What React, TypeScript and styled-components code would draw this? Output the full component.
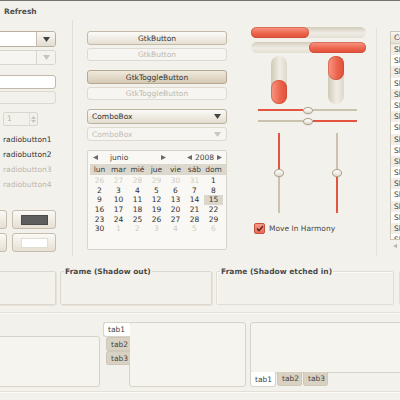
import React from "react";
import styled, { createGlobalStyle } from "styled-components";

const GlobalStyle = createGlobalStyle`
  html, body {
    margin: 0;
    padding: 0;
    background: #f3f1ec;
  }
  body {
    font-family: "DejaVu Sans", "Liberation Sans", sans-serif;
  }
  * {
    box-sizing: border-box;
  }
`;

const Window = styled.div`
  width: 400px;
  height: 400px;
  overflow: hidden;
  background: #f3f1ec;
  border-top: 1px solid #727272;
  font-size: 7.5px;
  color: #3c3c3c;
`;

const Toolbar = styled.div`
  height: 19px;
  display: flex;
  align-items: center;
  padding: 1px 0 0 4px;
  font-weight: bold;
  color: #4e4e4e;
`;

const Main = styled.div`
  display: flex;
  align-items: flex-start;
  height: 236px;
`;

/* left column */

const LeftColumn = styled.div`
  flex: none;
  width: 73px;
  align-self: stretch;
  padding: 11px 16px 0 0;
  border-right: 1px solid #e2ded5;
  display: flex;
  flex-direction: column;
`;

const Combo = styled.div<{ $disabled?: boolean }>`
  display: flex;
  height: ${(p) => (p.$disabled ? "15px" : "16px")};
  margin: ${(p) => (p.$disabled ? "3px 0 0 -20px" : "0 0 0 -20px")};
  border: 1px solid ${(p) => (p.$disabled ? "#dad5ca" : "#b9b09f")};
  border-radius: 3px;
  overflow: hidden;
`;

const ComboEntry = styled.div<{ $disabled?: boolean }>`
  flex: 1;
  background: ${(p) => (p.$disabled ? "#f6f5f1" : "#ffffff")};
`;

const ComboButton = styled.div<{ $disabled?: boolean }>`
  width: 19px;
  display: flex;
  align-items: center;
  justify-content: center;
  border-left: 1px solid ${(p) => (p.$disabled ? "#dad5ca" : "#c6bdac")};
  background: ${(p) =>
    p.$disabled ? "#f4f3ef" : "linear-gradient(#faf8f4, #e3ddd1)"};
`;

const Entry = styled.div<{ $disabled?: boolean }>`
  height: ${(p) => (p.$disabled ? "13px" : "14px")};
  margin: ${(p) => (p.$disabled ? "2px 0 0 -20px" : "10px 0 0 -20px")};
  border: 1px solid ${(p) => (p.$disabled ? "#dcd8ce" : "#c2b9a9")};
  border-radius: 3px;
  background: ${(p) => (p.$disabled ? "#f3f1ec" : "#ffffff")};
`;

const Spin = styled.div`
  display: flex;
  width: 35px;
  height: 14px;
  margin: 8px 0 0 3px;
  border: 1px solid #dbd6cc;
  border-radius: 2px;
  color: #b7b2a8;
`;

const SpinValue = styled.div`
  flex: 1;
  padding-left: 3px;
  line-height: 12px;
`;

const SpinArrows = styled.div`
  width: 8px;
  border-left: 1px solid #e2ded5;
  display: flex;
  flex-direction: column;
  align-items: center;
  justify-content: center;
  gap: 1px;
`;

const RadioList = styled.div`
  margin-top: 6px;
  display: flex;
  flex-direction: column;
`;

const RadioLabel = styled.div<{ $disabled?: boolean }>`
  height: 15px;
  line-height: 15px;
  padding-left: 3px;
  white-space: nowrap;
  color: ${(p) => (p.$disabled ? "#bbb6ac" : "#333333")};
`;

const ColorGrid = styled.div`
  display: grid;
  grid-template-columns: 44px 44px;
  grid-auto-rows: 19px;
  gap: 4px 5px;
  margin: 18px 0 0 -37px;
`;

const ColorButton = styled.div`
  display: flex;
  align-items: center;
  justify-content: center;
  border: 1px solid #c7bdab;
  border-radius: 3px;
  background: linear-gradient(#fbfaf7, #e6dfd3);
`;

const Swatch = styled.div<{ $color: string; $edge: string }>`
  width: 27px;
  height: 10px;
  background: ${(p) => p.$color};
  border: 1px solid ${(p) => p.$edge};
`;

/* middle column */

const MiddleColumn = styled.div`
  flex: none;
  width: 140px;
  margin-left: 14px;
  padding-top: 11px;
  display: flex;
  flex-direction: column;
`;

const PushButton = styled.div<{ $disabled?: boolean; $pressed?: boolean; $gap: number }>`
  height: ${(p) => (p.$disabled ? "13px" : "14px")};
  margin-top: ${(p) => p.$gap}px;
  display: flex;
  align-items: center;
  justify-content: center;
  border-radius: 3px;
  border: 1px solid
    ${(p) => (p.$disabled ? "#dedad1" : p.$pressed ? "#b5a890" : "#c3b9a7")};
  background: ${(p) =>
    p.$disabled
      ? "#f6f5f1"
      : p.$pressed
      ? "linear-gradient(#efe9de, #d6cab4)"
      : "linear-gradient(#fcfbf8, #e5dfd3)"};
  color: ${(p) => (p.$disabled ? "#bdb8ae" : "#333333")};
`;

const ComboBox = styled.div<{ $disabled?: boolean; $gap: number }>`
  height: ${(p) => (p.$disabled ? "14px" : "15px")};
  margin-top: ${(p) => p.$gap}px;
  display: flex;
  align-items: center;
  justify-content: space-between;
  padding: 0 5px 0 4px;
  border-radius: 3px;
  border: 1px solid ${(p) => (p.$disabled ? "#dedad1" : "#bdb3a1")};
  background: ${(p) =>
    p.$disabled ? "#f6f5f1" : "linear-gradient(#fbfaf7, #e3ddd0)"};
  color: ${(p) => (p.$disabled ? "#c2bdb3" : "#333333")};
`;

const Calendar = styled.div`
  margin-top: 9px;
  height: 100px;
  border: 1px solid #dad5cb;
  border-radius: 2px;
  background: #f9f8f5;
`;

const CalHeader = styled.div`
  height: 13px;
  display: flex;
  align-items: center;
  justify-content: space-between;
  padding: 0 4px 0 5px;
  color: #444;
`;

const CalGroup = styled.div<{ $gap: number }>`
  display: flex;
  align-items: center;
  gap: ${(p) => p.$gap}px;
`;

const DayNames = styled.div`
  display: grid;
  grid-template-columns: repeat(7, 19px);
  height: 11px;
  margin-left: 2px;
  background: #dcd8ce;
  align-items: center;
  text-align: center;
  color: #3e3e3e;
`;

const Days = styled.div`
  display: grid;
  grid-template-columns: repeat(7, 19px);
  grid-auto-rows: 9.7px;
  margin: 1px 0 0 2px;
  text-align: center;
`;

const Day = styled.div<{ $other?: boolean; $selected?: boolean }>`
  line-height: 9.7px;
  color: ${(p) => (p.$other ? "#d0cbc1" : "#303030")};
  background: ${(p) => (p.$selected ? "#dad6cc" : "transparent")};
`;

/* right column */

const RightColumn = styled.div`
  flex: none;
  width: 115px;
  margin-left: 24px;
  padding-top: 7px;
  display: flex;
  flex-direction: column;
`;

const HTrough = styled.div<{ $end?: boolean; $gap: number }>`
  height: 11px;
  margin-top: ${(p) => p.$gap}px;
  display: flex;
  justify-content: ${(p) => (p.$end ? "flex-end" : "flex-start")};
  border-radius: 6px;
  background: linear-gradient(#d3ccba, #efece5 55%, #e3ded2);
`;

const HFill = styled.div`
  width: 50%;
  border-radius: 6px;
  background: linear-gradient(#f79a86, #ec624b 60%, #df503a);
  box-shadow: inset 0 0 0 1px rgba(196, 70, 48, 0.5);
`;

const VBarRow = styled.div`
  display: flex;
  height: 48px;
  margin-top: 3px;
  padding-left: 20px;
  gap: 41px;
`;

const VTrough = styled.div<{ $end?: boolean }>`
  width: 16px;
  display: flex;
  flex-direction: column;
  justify-content: ${(p) => (p.$end ? "flex-end" : "flex-start")};
  border-radius: 8px;
  background: linear-gradient(to right, #d1cab8, #f0ede6 55%, #ddd8ca);
`;

const VFill = styled.div`
  height: 50%;
  border-radius: 8px;
  background: linear-gradient(to right, #f79a86, #ec624b 60%, #df503a);
  box-shadow: inset 0 0 0 1px rgba(196, 70, 48, 0.5);
`;

const HSliders = styled.div`
  display: flex;
  flex-direction: column;
  gap: 3px;
  width: 99px;
  margin: 2px 0 0 7px;
`;

const HSlider = styled.div`
  height: 8px;
  display: flex;
  align-items: center;
`;

const HSeg = styled.div<{ $red?: boolean; $grow: number }>`
  flex: ${(p) => p.$grow};
  height: 2px;
  background: ${(p) => (p.$red ? "#e4553f" : "#cbc2ad")};
`;

const Knob = styled.div<{ $vertical?: boolean }>`
  flex: none;
  width: 10px;
  height: ${(p) => (p.$vertical ? "8px" : "7px")};
  border-radius: 50%;
  border: 1px solid #a99f88;
  background: linear-gradient(#ffffff, #e4ded2);
  box-shadow: 0 1px 0 rgba(0, 0, 0, 0.06);
`;

const VSliders = styled.div`
  display: flex;
  height: 80px;
  margin-top: 8px;
  padding-left: 23px;
  gap: 48px;
`;

const VSlider = styled.div`
  width: 10px;
  display: flex;
  flex-direction: column;
  align-items: center;
`;

const VSeg = styled.div<{ $red?: boolean; $grow: number }>`
  flex: ${(p) => p.$grow};
  width: 2px;
  background: ${(p) => (p.$red ? "#e4553f" : "#cbc2ad")};
`;

const CheckRow = styled.div`
  display: flex;
  align-items: center;
  gap: 4px;
  margin-top: 10px;
  padding-left: 3px;
  color: #4a4a4a;
`;

const CheckBox = styled.div`
  width: 11px;
  height: 11px;
  border-radius: 2px;
  border: 1px solid #c8513d;
  background: linear-gradient(#f49a87, #eb6a54);
  display: flex;
  align-items: center;
  justify-content: center;
`;

const VSeparator = styled.div`
  flex: none;
  width: 1px;
  align-self: stretch;
  margin: 8px 0 0 10px;
  background: #e6e2da;
`;

const ListColumn = styled.div`
  flex: none;
  width: 30px;
  margin-left: 13px;
  padding-top: 11px;
  display: flex;
  flex-direction: column;
`;

const List = styled.div`
  height: 209px;
  overflow: hidden;
  border: 1px solid #cdc6b8;
  border-right: none;
  background: #ffffff;
`;

const ListHeader = styled.div`
  height: 12px;
  line-height: 12px;
  padding-left: 3px;
  background: linear-gradient(#f7f5f1, #e6e1d7);
  border-bottom: 1px solid #d6d0c4;
  color: #444;
  white-space: nowrap;
  overflow: hidden;
`;

const ListRow = styled.div<{ $odd: boolean }>`
  height: 11.2px;
  line-height: 11.2px;
  padding-left: 3px;
  white-space: nowrap;
  overflow: hidden;
  background: ${(p) => (p.$odd ? "#f1efe9" : "#ffffff")};
  color: #333;
`;

const ScrollArrow = styled.div`
  margin: 3px 0 0 3px;
  height: 6px;
  display: flex;
  align-items: center;
`;

/* frames */

const FramesRow = styled.div`
  display: flex;
  gap: 4px;
  margin-top: 11px;
`;

const Frame = styled.fieldset<{ $width: number; $offset?: number; $etched?: boolean }>`
  flex: none;
  width: ${(p) => p.$width}px;
  height: 38px;
  margin: 0 0 0 ${(p) => p.$offset ?? 0}px;
  padding: 0 0 0 3px;
  min-width: 0;
  border: 1px solid ${(p) => (p.$etched ? "#e1ddd4" : "#dcd8ce")};
  border-radius: 2px;
  box-shadow: ${(p) => (p.$etched ? "inset 1px 1px 0 #fbfaf8" : "1px 1px 0 #e6e2d9")};
`;

const FrameLabel = styled.legend`
  padding: 0 1px;
  line-height: 9px;
  font-weight: bold;
  color: #4a4a4a;
  white-space: nowrap;
`;

const HLine = styled.div<{ $gap: number }>`
  height: 2px;
  margin-top: ${(p) => p.$gap}px;
  border-top: 1px solid #e4e0d7;
  border-bottom: 1px solid #fbfaf7;
`;

/* notebooks */

const NotebookRow = styled.div`
  display: flex;
  align-items: flex-start;
  height: 65px;
  margin-top: 8px;
`;

const Panel = styled.div<{ $width: number; $height: number }>`
  flex: none;
  width: ${(p) => p.$width}px;
  height: ${(p) => p.$height}px;
  border: 1px solid #d8d3c8;
  border-radius: 3px;
  background: #f5f4ef;
`;

const PlainNotebook = styled.div`
  margin: 14px 0 0 -10px;
`;

const SideNotebook = styled.div`
  display: flex;
  margin-left: 3px;
`;

const SideTabs = styled.div`
  width: 27px;
  margin-right: -1px;
  display: flex;
  flex-direction: column;
  align-items: flex-end;
  position: relative;
  z-index: 1;
`;

const Tab = styled.div<{ $active?: boolean; $side?: boolean }>`
  height: ${(p) => (p.$active ? "15px" : "14px")};
  width: ${(p) => (p.$side ? (p.$active ? "27px" : "24px") : p.$active ? "26px" : "25px")};
  padding-left: 4px;
  display: flex;
  align-items: center;
  color: #444;
  background: ${(p) => (p.$active ? "#ffffff" : "#d9d2c3")};
  border: 1px solid ${(p) => (p.$active ? "#d8d3c8" : "#cfc8b8")};
  border-radius: ${(p) => (p.$side ? "3px 0 0 3px" : "0 0 3px 3px")};
  ${(p) => (p.$side ? "border-right: none;" : "border-top: none;")}
`;

const BottomNotebook = styled.div`
  margin-left: 4px;
  display: flex;
  flex-direction: column;
`;

const BottomTabs = styled.div`
  display: flex;
  gap: 1px;
  margin-top: -1px;
  position: relative;
  z-index: 1;
`;

const Tri = ({ dir, color = "#444", w = 6, h = 4 }: { dir: "down" | "up" | "left" | "right"; color?: string; w?: number; h?: number }) => {
  const pts = {
    down: `0,0 ${w},0 ${w / 2},${h}`,
    up: `0,${h} ${w},${h} ${w / 2},0`,
    left: `${w},0 ${w},${h} 0,${h / 2}`,
    right: `0,0 0,${h} ${w},${h / 2}`,
  }[dir];
  return (
    <svg width={w} height={h} viewBox={`0 0 ${w} ${h}`}>
      <polygon points={pts} fill={color} />
    </svg>
  );
};

const dayNames = ["lun", "mar", "mié", "jue", "vie", "sáb", "dom"];

const days: { n: number; other?: boolean }[] = [
  ...[26, 27, 28, 29, 30, 31].map((n) => ({ n, other: true })),
  ...Array.from({ length: 30 }, (_, i) => ({ n: i + 1 })),
  ...[1, 2, 3, 4, 5, 6].map((n) => ({ n, other: true })),
];

export default function App() {
  return (
    <>
      <GlobalStyle />
      <Window>
        <Toolbar>Refresh</Toolbar>
        <Main>
          <LeftColumn>
            <Combo>
              <ComboEntry />
              <ComboButton>
                <Tri dir="down" w={7} h={5} />
              </ComboButton>
            </Combo>
            <Combo $disabled>
              <ComboEntry $disabled />
              <ComboButton $disabled>
                <Tri dir="down" w={7} h={5} color="#c9c4ba" />
              </ComboButton>
            </Combo>
            <Entry />
            <Entry $disabled />
            <Spin>
              <SpinValue>1</SpinValue>
              <SpinArrows>
                <Tri dir="up" w={5} h={3} color="#c9c4ba" />
                <Tri dir="down" w={5} h={3} color="#c9c4ba" />
              </SpinArrows>
            </Spin>
            <RadioList>
              <RadioLabel>radiobutton1</RadioLabel>
              <RadioLabel>radiobutton2</RadioLabel>
              <RadioLabel $disabled>radiobutton3</RadioLabel>
              <RadioLabel $disabled>radiobutton4</RadioLabel>
            </RadioList>
            <ColorGrid>
              <ColorButton />
              <ColorButton>
                <Swatch $color="#5e5e5e" $edge="#4a4a4a" />
              </ColorButton>
              <ColorButton />
              <ColorButton>
                <Swatch $color="#ffffff" $edge="#e2ddd3" />
              </ColorButton>
            </ColorGrid>
          </LeftColumn>

          <MiddleColumn>
            <PushButton $gap={0}>GtkButton</PushButton>
            <PushButton $gap={3} $disabled>GtkButton</PushButton>
            <PushButton $gap={9} $pressed>GtkToggleButton</PushButton>
            <PushButton $gap={3} $disabled>GtkToggleButton</PushButton>
            <ComboBox $gap={9}>
              ComboBox
              <Tri dir="down" w={7} h={5} />
            </ComboBox>
            <ComboBox $gap={3} $disabled>
              ComboBox
              <Tri dir="down" w={7} h={5} color="#cbc6bc" />
            </ComboBox>
            <Calendar>
              <CalHeader>
                <CalGroup $gap={12}>
                  <Tri dir="left" w={5} h={5} color="#6a6a6a" />
                  <span>junio</span>
                  <span style={{ width: 9 }} />
                  <Tri dir="right" w={5} h={5} color="#6a6a6a" />
                </CalGroup>
                <CalGroup $gap={3}>
                  <Tri dir="left" w={5} h={5} color="#6a6a6a" />
                  <span>2008</span>
                  <Tri dir="right" w={5} h={5} color="#6a6a6a" />
                </CalGroup>
              </CalHeader>
              <DayNames>
                {dayNames.map((d) => (
                  <span key={d}>{d}</span>
                ))}
              </DayNames>
              <Days>
                {days.map((d, i) => (
                  <Day key={i} $other={d.other} $selected={!d.other && d.n === 15}>
                    {d.n}
                  </Day>
                ))}
              </Days>
            </Calendar>
          </MiddleColumn>

          <RightColumn>
            <HTrough $gap={0}>
              <HFill />
            </HTrough>
            <HTrough $gap={4} $end>
              <HFill />
            </HTrough>
            <VBarRow>
              <VTrough $end>
                <VFill />
              </VTrough>
              <VTrough>
                <VFill />
              </VTrough>
            </VBarRow>
            <HSliders>
              <HSlider>
                <HSeg $red $grow={0.5} />
                <Knob />
                <HSeg $grow={0.5} />
              </HSlider>
              <HSlider>
                <HSeg $grow={0.5} />
                <Knob />
                <HSeg $red $grow={0.5} />
              </HSlider>
            </HSliders>
            <VSliders>
              <VSlider>
                <VSeg $red $grow={0.5} />
                <Knob $vertical />
                <VSeg $grow={0.5} />
              </VSlider>
              <VSlider>
                <VSeg $grow={0.5} />
                <Knob $vertical />
                <VSeg $red $grow={0.5} />
              </VSlider>
            </VSliders>
            <CheckRow>
              <CheckBox>
                <svg width="8" height="7" viewBox="0 0 8 7">
                  <path d="M1 3.6 L3 5.6 L7 1" stroke="#4a2a22" strokeWidth="1.4" fill="none" />
                </svg>
              </CheckBox>
              <span>Move In Harmony</span>
            </CheckRow>
          </RightColumn>

          <VSeparator />

          <ListColumn>
            <List>
              <ListHeader>Column</ListHeader>
              {Array.from({ length: 18 }, (_, i) => (
                <ListRow key={i} $odd={i % 2 === 0}>
                  Slot {i + 1}
                </ListRow>
              ))}
            </List>
            <ScrollArrow>
              <Tri dir="left" w={4} h={4} color="#b9b3a7" />
            </ScrollArrow>
          </ListColumn>
        </Main>

        <FramesRow>
          <Frame $width={152} $offset={-96}>
            <FrameLabel>Frame (Shadow in)</FrameLabel>
          </Frame>
          <Frame $width={152}>
            <FrameLabel>Frame (Shadow out)</FrameLabel>
          </Frame>
          <Frame $width={178} $etched>
            <FrameLabel>Frame (Shadow etched in)</FrameLabel>
          </Frame>
          <Frame $width={160} $offset={1} $etched>
            <FrameLabel>Frame (Shadow etched out)</FrameLabel>
          </Frame>
        </FramesRow>

        <HLine $gap={7} />

        <NotebookRow>
          <PlainNotebook>
            <Panel $width={110} $height={51} />
          </PlainNotebook>
          <SideNotebook>
            <SideTabs>
              <Tab $side $active>tab1</Tab>
              <Tab $side>tab2</Tab>
              <Tab $side>tab3</Tab>
            </SideTabs>
            <Panel $width={117} $height={65} />
          </SideNotebook>
          <BottomNotebook>
            <Panel $width={170} $height={51} />
            <BottomTabs>
              <Tab $active>tab1</Tab>
              <Tab>tab2</Tab>
              <Tab>tab3</Tab>
            </BottomTabs>
          </BottomNotebook>
        </NotebookRow>

        <HLine $gap={4} />
      </Window>
    </>
  );
}
